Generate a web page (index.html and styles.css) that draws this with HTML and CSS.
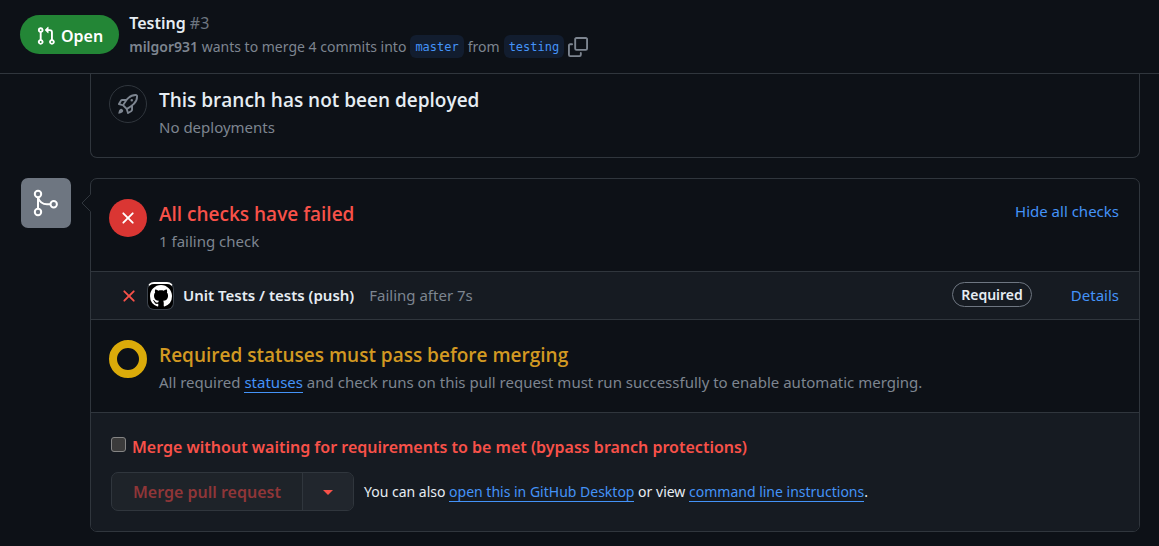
FILE: index.html
```html
<!DOCTYPE html>
<html lang="en">
<head>
<meta charset="utf-8">
<title>Testing #3</title>
<link rel="stylesheet" href="styles.css">
</head>
<body>
<header class="pr-header">
  <span class="state">
    <svg width="20" height="20" viewBox="0 0 16 16" fill="currentColor" aria-hidden="true"><path d="M1.5 3.25a2.25 2.25 0 1 1 3 2.122v5.256a2.251 2.251 0 1 1-1.5 0V5.372A2.25 2.25 0 0 1 1.5 3.25Zm5.677-.177L9.573.677A.25.25 0 0 1 10 .854V2.5h1A2.5 2.5 0 0 1 13.500 5v5.628a2.251 2.251 0 1 1-1.5 0V5a1 1 0 0 0-1-1h-1v1.646a.25.25 0 0 1-.427.177L7.177 3.427a.25.25 0 0 1 0-.354ZM3.750 2.500a.75.75 0 1 0 0 1.500.75.75 0 0 0 0-1.500Zm0 9.500a.75.75 0 1 0 0 1.500.75.75 0 0 0 0-1.500Zm8.250.750a.75.75 0 1 0 1.500 0 .75.75 0 0 0-1.500 0Z"/></svg>
    Open
  </span>
  <div class="pr-info">
    <h1 class="pr-title">Testing <span class="pr-number">#3</span></h1>
    <div class="pr-meta">
      <span><b>milgor931</b> wants to merge 4 commits into</span>
      <a class="branch" href="#master">master</a>
      <span>from</span>
      <a class="branch" href="#testing">testing</a>
      <button class="copy" type="button" aria-label="Copy branch name">
        <svg width="20" height="20" viewBox="0 0 16 16" fill="currentColor" aria-hidden="true"><path d="M0 6.750C0 5.784.784 5 1.750 5h1.500a.75.75 0 0 1 0 1.500h-1.500a.25.25 0 0 0-.25.25v7.500c0 .138.112.25.25.25h7.500a.25.25 0 0 0 .25-.25v-1.500a.75.75 0 0 1 1.500 0v1.500A1.750 1.750 0 0 1 9.250 16h-7.500A1.750 1.750 0 0 1 0 14.250Z"/><path d="M5 1.750C5 .784 5.784 0 6.750 0h7.500C15.216 0 16 .784 16 1.750v7.500A1.750 1.750 0 0 1 14.250 11h-7.500A1.750 1.750 0 0 1 5 9.250Zm1.750-.25a.25.25 0 0 0-.25.25v7.500c0 .138.112.25.25.25h7.500a.25.25 0 0 0 .25-.25v-7.500a.25.25 0 0 0-.25-.25Z"/></svg>
      </button>
    </div>
  </div>
</header>

<main class="timeline">
  <section class="box deployments">
    <div class="row">
      <span class="badge badge-outline">
        <svg width="20" height="20" viewBox="0 0 16 16" fill="currentColor" aria-hidden="true"><path d="M14.064 0h.186C15.216 0 16 .784 16 1.750v.186a8.752 8.752 0 0 1-2.564 6.186l-.458.459c-.314.314-.641.616-.979.904v3.207c0 .608-.315 1.172-.833 1.490l-2.774 1.707a.749.749 0 0 1-1.110-.418l-.954-3.102a1.214 1.214 0 0 1-.145-.125L3.754 9.816a1.218 1.218 0 0 1-.124-.145L.528 8.717a.749.749 0 0 1-.418-1.110l1.710-2.774A1.748 1.748 0 0 1 3.310 4h3.204c.288-.338.59-.665.904-.979l.459-.458A8.749 8.749 0 0 1 14.064 0ZM8.938 3.623h-.002l-.458.458c-.76.76-1.437 1.598-2.020 2.500l-1.500 2.317 2.143 2.143 2.317-1.500c.902-.583 1.740-1.260 2.499-2.020l.459-.458a7.250 7.250 0 0 0 2.123-5.127V1.750a.25.25 0 0 0-.25-.25h-.186a7.249 7.249 0 0 0-5.125 2.123ZM3.560 14.560c-.732.732-2.334 1.045-3.005 1.148a.234.234 0 0 1-.201-.064.234.234 0 0 1-.064-.201c.103-.671.416-2.273 1.150-3.003a1.502 1.502 0 1 1 2.120 2.120Zm6.940-3.935c-.088.06-.177.118-.266.175l-2.350 1.521.548 1.783 1.949-1.200a.25.25 0 0 0 .119-.213ZM3.678 8.116 5.200 5.766c.058-.09.117-.178.176-.266H3.309a.25.25 0 0 0-.213.119l-1.200 1.950ZM12 5a1 1 0 1 1-2 0 1 1 0 0 1 2 0Z"/></svg>
      </span>
      <div class="row-text">
        <h2 class="heading">This branch has not been deployed</h2>
        <p class="note">No deployments</p>
      </div>
    </div>
  </section>

  <div class="merge-line">
    <span class="merge-icon">
      <svg width="30" height="30" viewBox="0 0 30 30" fill="none" stroke="currentColor" stroke-width="2" aria-hidden="true"><circle cx="7" cy="6" r="3.200"/><circle cx="7" cy="24" r="3.200"/><circle cx="22.700" cy="16.200" r="3.200"/><path d="M7 9v12M7 9.500c1.500 4.500 5 6.700 9 6.700h3.500"/></svg>
    </span>
    <section class="box merge-box">
      <svg class="caret" width="10" height="18" viewBox="0 0 10 18" aria-hidden="true"><path class="caret-fill" d="M10 0 1 9l9 9Z"/><path class="caret-line" d="M9.500 0.500 1 9l8.500 8.500"/></svg>
      <div class="row checks">
        <span class="badge badge-red">
          <svg width="20" height="20" viewBox="0 0 16 16" fill="currentColor" aria-hidden="true"><path d="M3.720 3.720a.75.75 0 0 1 1.060 0L8 6.940l3.220-3.220a.749.749 0 0 1 1.275.326.749.749 0 0 1-.215.734L9.060 8l3.220 3.220a.749.749 0 0 1-.326 1.275.749.749 0 0 1-.734-.215L8 9.060l-3.220 3.220a.751.751 0 0 1-1.042-.018.751.751 0 0 1-.018-1.042L6.940 8 3.720 4.780a.75.75 0 0 1 0-1.060Z"/></svg>
        </span>
        <div class="row-text">
          <h2 class="heading red">All checks have failed</h2>
          <p class="note">1 failing check</p>
        </div>
        <button class="toggle" type="button">Hide all checks</button>
      </div>

      <div class="check">
        <svg class="check-x" width="20" height="20" viewBox="0 0 16 16" fill="currentColor" aria-hidden="true"><path d="M3.720 3.720a.75.75 0 0 1 1.060 0L8 6.940l3.220-3.220a.749.749 0 0 1 1.275.326.749.749 0 0 1-.215.734L9.060 8l3.220 3.220a.749.749 0 0 1-.326 1.275.749.749 0 0 1-.734-.215L8 9.060l-3.220 3.220a.751.751 0 0 1-1.042-.018.751.751 0 0 1-.018-1.042L6.940 8 3.720 4.780a.75.75 0 0 1 0-1.060Z"/></svg>
        <span class="avatar">
          <svg width="22" height="22" viewBox="0 0 16 16" fill="currentColor" aria-hidden="true"><path d="M8 0c4.420 0 8 3.580 8 8a8.013 8.013 0 0 1-5.450 7.590c-.4.08-.55-.17-.55-.38 0-.27.01-1.130.01-2.200 0-.75-.25-1.230-.54-1.480 1.780-.2 3.650-.88 3.650-3.950 0-.88-.31-1.590-.82-2.150.08-.2.36-1.020-.08-2.120 0 0-.67-.22-2.200.82-.64-.18-1.320-.27-2-.27-.68 0-1.360.09-2 .27-1.530-1.030-2.200-.82-2.200-.82-.44 1.100-.16 1.920-.08 2.120-.51.56-.82 1.280-.82 2.150 0 3.060 1.860 3.750 3.640 3.950-.23.2-.44.55-.51 1.070-.46.21-1.610.55-2.330-.66-.15-.24-.6-.83-1.230-.82-.67.01-.27.38.01.53.34.19.73.9.82 1.130.16.45.68 1.310 2.690.94 0 .67.01 1.300.01 1.490 0 .21-.15.45-.55.38A7.995 7.995 0 0 1 0 8c0-4.420 3.580-8 8-8Z"/></svg>
        </span>
        <b class="check-name">Unit Tests / tests (push)</b>
        <span class="check-status">Failing after 7s</span>
        <span class="required">Required</span>
        <a class="details" href="#details">Details</a>
      </div>

      <div class="row statuses">
        <span class="badge ring"></span>
        <div class="row-text">
          <h2 class="heading yellow">Required statuses must pass before merging</h2>
          <p class="note">All required <a class="underlined" href="#statuses">statuses</a> and check runs on this pull request must run successfully to enable automatic merging.</p>
        </div>
      </div>

      <div class="actions">
        <label class="bypass"><input class="tick" type="checkbox">Merge without waiting for requirements to be met (bypass branch protections)</label>
        <div class="merge-row">
          <div class="group">
            <button class="merge" type="button" disabled>Merge pull request</button>
            <button class="menu" type="button" aria-label="Select merge method"><span class="arrow"></span></button>
          </div>
          <p class="also">You can also <a class="underlined" href="#desktop">open this in GitHub Desktop</a> or view <a class="underlined" href="#cli">command line instructions</a>.</p>
        </div>
      </div>
    </section>
  </div>
</main>
</body>
</html>
```
FILE: styles.css
```css
* {
  box-sizing: border-box;
}

body {
  margin: 0;
  background: #0d1117;
  color: #e6edf3;
  font-family: "Noto Sans", "Open Sans", sans-serif;
  font-size: 15px;
  line-height: 24px;
}

h1, h2, p {
  margin: 0;
}

svg {
  display: block;
  flex: none;
}

a {
  color: #4493f8;
  text-decoration: none;
}

button {
  margin: 0;
  padding: 0;
  border: 0;
  background: none;
  color: inherit;
  font: inherit;
}

b {
  font-weight: 600;
}

.pr-header {
  display: flex;
  align-items: center;
  gap: 10px;
  height: 74px;
  padding: 0 20px 4px;
  border-bottom: 1px solid #30363d;
}

.state {
  display: flex;
  align-items: center;
  gap: 5px;
  height: 39px;
  padding: 2px 16px 0;
  border-radius: 20px;
  background: #238636;
  color: #fff;
  font-size: 16px;
  font-weight: 600;
}

.pr-title {
  font-size: 16px;
  font-weight: 600;
  line-height: 24px;
}

.pr-number {
  color: #6e7681;
  font-weight: 400;
}

.pr-meta {
  display: flex;
  align-items: center;
  gap: 4px;
  color: #7d8590;
  font-size: 14px;
}

.branch {
  padding: 1px 5px 0;
  border-radius: 6px;
  background: #121d2f;
  font-family: "DejaVu Sans Mono", monospace;
  font-size: 12px;
  line-height: 22px;
}

.timeline {
  padding: 0 19px 14px 21px;
}

.box {
  border: 1px solid #30363d;
  border-radius: 7px;
}

.deployments {
  margin-left: 69px;
  border-top: 0;
  border-radius: 0 0 7px 7px;
}

.row {
  display: flex;
  gap: 12px;
  padding: 20px 20px 16px 18px;
}

.deployments .row {
  padding: 11px 20px 17px 18px;
}

.row-text {
  flex: 1;
}

.heading {
  font-family: "Open Sans", "Noto Sans", sans-serif;
  font-size: 19px;
  font-weight: 600;
  line-height: 30px;
}

.note {
  color: #7d8590;
  line-height: 25px;
}

.red {
  color: #f85149;
}

.yellow {
  color: #d29922;
}

.badge {
  display: flex;
  flex: none;
  align-items: center;
  justify-content: center;
  width: 38px;
  height: 38px;
  border-radius: 50%;
}

.badge-outline {
  border: 1px solid #30363d;
  color: #7d8590;
}

.badge-red {
  background: #da3633;
  color: #fff;
}

.ring {
  border: 8px solid #dbab0a;
}

.merge-line {
  display: flex;
  align-items: flex-start;
  gap: 19px;
  margin-top: 20px;
}

.merge-icon {
  display: flex;
  flex: none;
  align-items: center;
  justify-content: center;
  width: 50px;
  height: 50px;
  border-radius: 7px;
  background: #6e7681;
  color: #fff;
}

.merge-box {
  position: relative;
  flex: 1;
}

.caret {
  position: absolute;
  top: 15px;
  left: -10px;
}

.caret-fill {
  fill: #0d1117;
}

.caret-line {
  fill: none;
  stroke: #30363d;
}

.checks {
  min-height: 92px;
}

.toggle {
  align-self: flex-start;
  color: #4493f8;
}

.check {
  display: flex;
  align-items: center;
  height: 49px;
  padding: 0 20px 0 28px;
  border: solid #30363d;
  border-width: 1px 0;
  background: #161b22;
}

.check-x {
  color: #f85149;
}

.avatar {
  display: flex;
  align-items: center;
  justify-content: center;
  width: 27px;
  height: 28px;
  margin: 0 9px 0 8px;
  border: 1px solid #3d444d;
  border-top: 2px solid #fff;
  border-radius: 7px;
  background: #000;
  color: #fff;
}

.check-name,
.check-status,
.required,
.details {
  margin-bottom: 2px;
}

.check-status {
  flex: 1;
  margin-left: 15px;
  color: #7d8590;
}

.required {
  padding: 0 8px;
  border: 1px solid #6e7681;
  border-radius: 13px;
  font-size: 14px;
  font-weight: 600;
  line-height: 23px;
}

.details {
  margin-left: 39px;
}

.statuses {
  min-height: 92px;
}

.underlined {
  border-bottom: 1px solid #4493f8;
}

.actions {
  padding: 20px;
  border-top: 1px solid #30363d;
  border-radius: 0 0 6px 6px;
  background: #161b22;
}

.bypass {
  display: flex;
  align-items: center;
  gap: 6px;
  color: #f85149;
  font-size: 16px;
  font-weight: 600;
  line-height: 28px;
}

.tick {
  appearance: none;
  flex: none;
  width: 15px;
  height: 15px;
  margin: 0 0 5px;
  border: 1px solid #858585;
  border-radius: 3px;
  background: #3b3b3b;
}

.merge-row {
  display: flex;
  align-items: center;
  gap: 10px;
  margin-top: 11px;
}

.group {
  display: flex;
  height: 39px;
  border: 1px solid #30363d;
  border-radius: 7px;
  background: #1e2329;
}

.merge {
  padding: 0 21px;
  color: #8f3638;
  font-size: 16px;
  font-weight: 600;
}

.menu {
  width: 51px;
  border-left: 1px solid #30363d;
  border-radius: 0 6px 6px 0;
  background: #21262d;
}

.arrow {
  display: block;
  width: 10px;
  margin: 2px auto 0;
  border: 5px solid transparent;
  border-top-color: #f85149;
  border-bottom: 0;
}

.also {
  font-size: 14px;
}
```
